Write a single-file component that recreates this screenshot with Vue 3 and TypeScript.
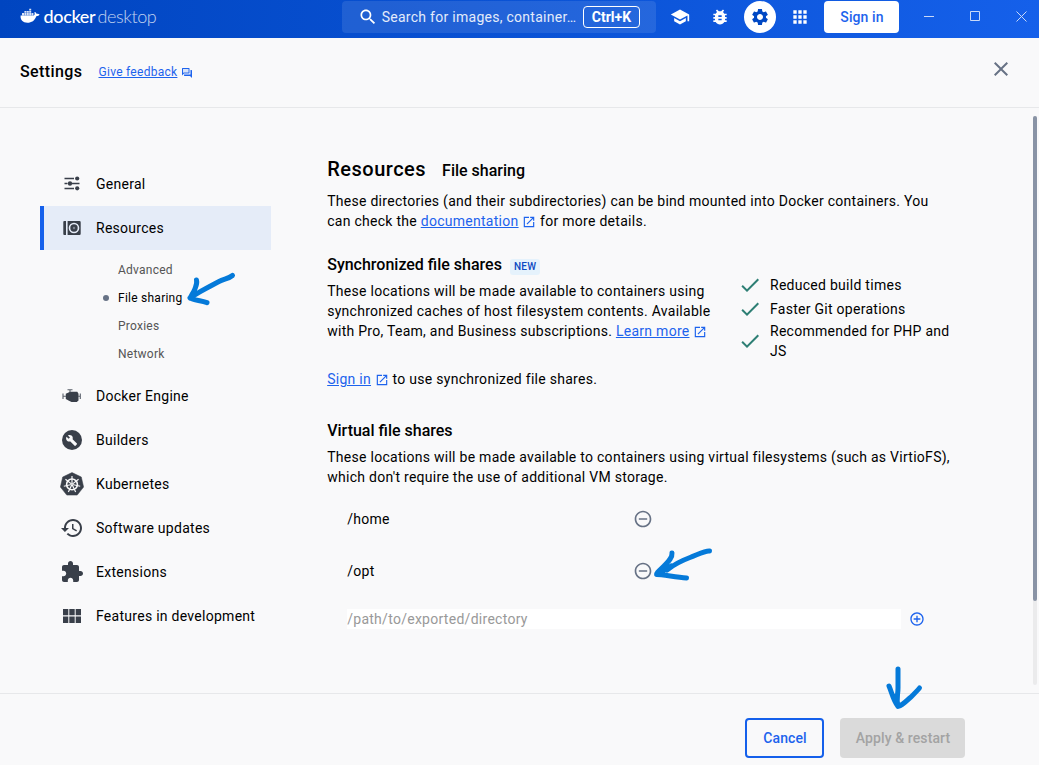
<script setup lang="ts">
import { ref } from 'vue'

interface NavItem {
  id: string
  label: string
  children?: string[]
}

const nav: NavItem[] = [
  { id: 'general', label: 'General' },
  { id: 'resources', label: 'Resources', children: ['Advanced', 'File sharing', 'Proxies', 'Network'] },
  { id: 'engine', label: 'Docker Engine' },
  { id: 'builders', label: 'Builders' },
  { id: 'kubernetes', label: 'Kubernetes' },
  { id: 'updates', label: 'Software updates' },
  { id: 'extensions', label: 'Extensions' },
  { id: 'features', label: 'Features in development' },
]

const active = ref('resources')
const activeChild = ref('File sharing')
const benefits = ['Reduced build times', 'Faster Git operations', 'Recommended for PHP and JS']
const shares = ref(['/home', '/opt'])
const newPath = ref('')
const spokes = [0, 51.43, 102.86, 154.29, 205.71, 257.14, 308.57]

const openIcon =
  'M19 19H5V5h7V3H3v18h18v-9h-2v7zM14 3v2h3.59l-9.83 9.83 1.41 1.41L19 6.41V10h2V3h-7z'
const closeIcon =
  'M19 6.41 17.59 5 12 10.59 6.41 5 5 6.41 10.59 12 5 17.59 6.41 19 12 13.41 17.59 19 19 17.59 13.41 12z'

function removeShare(path: string): void {
  shares.value = shares.value.filter((s) => s !== path)
}
</script>

<template>
  <div class="window">
    <header class="titlebar">
      <div class="brand">
        <svg class="whale" viewBox="0 0 20 16">
          <path d="M0.6 7.600H13.800C14.700 7 15 5.800 14.300 4.600L15 3.900C16.100 4.500 16.600 5.300 16.600 6C17.700 5.700 18.800 5.900 19.600 6.500C18.900 7.800 17.900 8.200 16.300 8.200C14.800 12.600 11.700 14.700 7.400 14.700C2.800 14.700 .2 12.300 .6 7.600Z" />
          <path d="M2 5h2v2.600H2zM4.400 5h2v2.600h-2zM6.800 5h2v2.600h-2zM9.200 5h2v2.600h-2zM11.600 5h1.800v2.600h-1.800zM4.400 3h2v1.700h-2zM6.800 3h2v1.700h-2zM9.200 3h2v1.700h-2zM9.200 .8h2v1.800h-2z" opacity=".85" />
        </svg>
        <span class="word docker">docker</span>
        <span class="word desktop">desktop</span>
      </div>
      <div class="search">
        <svg class="i20" viewBox="0 0 24 24"><path d="M15.5 14h-.79l-.28-.27C15.41 12.59 16 11.11 16 9.5 16 5.91 13.09 3 9.5 3S3 5.91 3 9.5 5.91 16 9.5 16c1.61 0 3.09-.59 4.23-1.57l.27.28v.79l5 4.99L20.49 19l-4.99-5zm-6 0C7.01 14 5 11.99 5 9.5S7.01 5 9.5 5 14 7.01 14 9.5 11.99 14 9.5 14z" /></svg>
        <span class="search-text">Search for images, container…</span>
        <kbd>Ctrl+K</kbd>
      </div>
      <div class="tools">
        <span class="tool"><svg class="i20" viewBox="0 0 24 24"><path d="M5 13.18v4L12 21l7-3.82v-4L12 17l-7-3.82zM12 3 1 9l11 6 9-4.91V17h2V9L12 3z" /></svg></span>
        <span class="tool"><svg class="i20" viewBox="0 0 24 24"><path d="M20 8h-2.81c-.45-.78-1.07-1.45-1.82-1.96L17 4.41 15.59 3l-2.17 2.17C12.96 5.06 12.49 5 12 5s-.96.06-1.41.17L8.41 3 7 4.41l1.62 1.63C7.88 6.55 7.26 7.22 6.81 8H4v2h2.09c-.05.33-.09.66-.09 1v1H4v2h2v1c0 .34.04.67.09 1H4v2h2.81c1.04 1.79 2.97 3 5.19 3s4.15-1.21 5.19-3H20v-2h-2.09c.05-.33.09-.66.09-1v-1h2v-2h-2v-1c0-.34-.04-.67-.09-1H20V8zm-6 8h-4v-2h4v2zm0-4h-4v-2h4v2z" /></svg></span>
        <span class="tool on"><svg class="i20" viewBox="0 0 24 24"><path d="M19.14 12.94c.04-.3.06-.61.06-.94 0-.32-.02-.64-.07-.94l2.03-1.58c.18-.14.23-.41.12-.61l-1.92-3.32c-.12-.22-.37-.29-.59-.22l-2.39.96c-.5-.38-1.03-.7-1.62-.94l-.36-2.54c-.04-.24-.24-.41-.48-.41h-3.84c-.24 0-.43.17-.47.41l-.36 2.54c-.59.24-1.13.57-1.62.94l-2.39-.96c-.22-.08-.47 0-.59.22L2.74 8.87c-.12.21-.08.47.12.61l2.03 1.58c-.05.3-.09.63-.09.94s.02.64.07.94l-2.03 1.58c-.18.14-.23.41-.12.61l1.92 3.32c.12.22.37.29.59.22l2.39-.96c.5.38 1.03.7 1.62.94l.36 2.54c.05.24.24.41.48.41h3.84c.24 0 .44-.17.47-.41l.36-2.54c.59-.24 1.13-.56 1.62-.94l2.39.96c.22.08.47 0 .59-.22l1.92-3.32c.12-.22.07-.47-.12-.61l-2.01-1.58zM12 15.6c-1.98 0-3.6-1.62-3.6-3.6s1.62-3.6 3.6-3.6 3.6 1.62 3.6 3.6-1.62 3.6-3.6 3.6z" /></svg></span>
        <span class="tool"><svg class="i20" viewBox="0 0 24 24"><path d="M4 8h4V4H4v4zm6 12h4v-4h-4v4zm-6 0h4v-4H4v4zm0-6h4v-4H4v4zm6 0h4v-4h-4v4zm6-10v4h4V4h-4zm-6 4h4V4h-4v4zm6 6h4v-4h-4v4zm0 6h4v-4h-4v4z" /></svg></span>
      </div>
      <button class="signin">Sign in</button>
      <svg class="winctl" viewBox="0 0 104 12">
        <path d="M0 6.500H10M46.500 1.500h9v9h-9zM92.500 1.500l10 10M102.500 1.500l-10 10" />
      </svg>
    </header>

    <div class="subheader">
      <h1>Settings</h1>
      <a class="feedback">Give feedback</a>
      <svg class="fb-icon" viewBox="0 0 24 24"><path d="M15 4v7H5.170L4 12.170V4h11m1-2H3c-.55 0-1 .45-1 1v14l4-4h10c.55 0 1-.45 1-1V3c0-.55-.45-1-1-1zm5 4h-2v9H6v2c0 .55.45 1 1 1h11l4 4V7c0-.55-.45-1-1-1z" /><path d="M4 4h11v7H4z" opacity=".15" /></svg>
      <svg class="close" viewBox="0 0 24 24"><path :d="closeIcon" /></svg>
    </div>

    <div class="body">
      <nav class="sidebar">
        <template v-for="item in nav" :key="item.id">
          <div class="nav-item" :class="{ active: item.id === active }" @click="active = item.id">
            <span class="nav-icon">
              <svg v-if="item.id === 'general'" viewBox="0 0 24 24">
                <path d="M4.500 6.500H14M4.500 11.500H7.500M12 11.500h7.500M4.500 16.500H14" stroke="#393f49" stroke-width="1.500" fill="none" />
                <circle cx="17.200" cy="6.500" r="2.100" /><circle cx="10" cy="11.500" r="2.200" /><circle cx="17.200" cy="16.300" r="2.100" />
              </svg>
              <svg v-else-if="item.id === 'resources'" viewBox="0 0 24 24">
                <path d="M4.200 5h1.800v14H4.200a.9.9 0 0 1-.9-.9V5.900a.9.9 0 0 1 .9-.9zM7.600 5H19.500a1.200 1.200 0 0 1 1.200 1.200v11.600a1.200 1.200 0 0 1-1.200 1.200H7.600z" />
                <circle cx="14" cy="12" r="4.500" fill="none" stroke="#e6ecf8" stroke-width="1.600" />
                <circle cx="14" cy="12" r="1.200" fill="#7b828f" />
              </svg>
              <svg v-else-if="item.id === 'engine'" viewBox="0 0 24 24">
                <path d="M8 8.700 10 7.700h7.300l1.200 2V16.600l-1.700 1.400H11.500L8.500 16.400 5.800 15V9.800z" />
                <path d="M7.500 5.700h5M10 5.700v2.500M3 9.500v5.500M3 12.300h3M18 12.300h2.300M20.300 9.500v5.500" fill="none" stroke="#5a606a" stroke-width="1.100" />
              </svg>
              <svg v-else-if="item.id === 'builders'" viewBox="0 0 24 24">
                <circle cx="12" cy="12" r="10" />
                <path fill="#f9f9fa" d="M16.900 15.500 12.600 11.200c.4-1.100.15-2.450-.75-3.350-1.100-1.100-2.700-1.200-3.900-.45l2 2-1.350 1.350-2.050-2c-.75 1.200-.6 2.800.45 3.900.9.900 2.200 1.150 3.350.75l4.300 4.300c.25.25.6.25.85 0l1.400-1.400c.25-.2.25-.6 0-.8z" />
              </svg>
              <svg v-else-if="item.id === 'kubernetes'" viewBox="0 0 24 24">
                <path d="M12 .6 21.300 5 23.600 15 17.200 23.100H6.800L.4 15 2.700 5z" stroke="#393f49" stroke-width=".5" stroke-linejoin="round" />
                <g stroke="#f9f9fa" fill="none">
                  <circle cx="12" cy="12.400" r="5.400" stroke-width="1.600" />
                  <path v-for="a in spokes" :key="a" d="M12 12V4" stroke-width="1.200" :transform="`rotate(${a} 12 12.4)`" />
                </g>
              </svg>
              <svg v-else-if="item.id === 'updates'" viewBox="0 0 24 24">
                <path d="M13 3c-4.970 0-9 4.030-9 9H1l3.890 3.890.07.14L9 12H6c0-3.870 3.130-7 7-7s7 3.130 7 7-3.130 7-7 7c-1.930 0-3.680-.79-4.940-2.060l-1.420 1.420C8.270 19.990 10.510 21 13 21c4.970 0 9-4.030 9-9s-4.030-9-9-9zm-1 5v5l4.280 2.540.72-1.210-3.500-2.080V8H12z" />
              </svg>
              <svg v-else-if="item.id === 'extensions'" viewBox="0 0 24 24">
                <path d="M20.500 11H19V7c0-1.100-.9-2-2-2h-4V3.500C13 2.120 11.880 1 10.500 1S8 2.120 8 3.500V5H4c-1.100 0-1.990.9-1.990 2v3.800H3.500c1.490 0 2.700 1.210 2.700 2.700s-1.210 2.700-2.700 2.700H2V20c0 1.100.9 2 2 2h3.800v-1.500c0-1.490 1.210-2.700 2.700-2.700 1.490 0 2.700 1.210 2.700 2.700V22H17c1.100 0 2-.9 2-2v-4h1.500c1.380 0 2.500-1.120 2.500-2.500S21.880 11 20.500 11z" />
              </svg>
              <svg v-else viewBox="0 0 24 24">
                <path d="M3 5h5.300v6.300H3zM9.300 5h5.400v6.300H9.300zM15.700 5H21v6.300h-5.300zM3 12.500h5.300V19H3zM9.300 12.500h5.400V19H9.300zM15.700 12.500H21V19h-5.300z" />
              </svg>
            </span>
            {{ item.label }}
          </div>
          <ul v-if="item.children" class="sub">
            <li v-for="c in item.children" :key="c" :class="{ current: c === activeChild }" @click="activeChild = c">{{ c }}</li>
          </ul>
        </template>
      </nav>

      <main class="content">
        <div class="title"><h2>Resources</h2><h3>File sharing</h3></div>
        <p class="intro">
          These directories (and their subdirectories) can be bind mounted into Docker containers. You can check the
          <a>documentation</a><svg class="ext" viewBox="0 0 24 24"><path :d="openIcon" /></svg> for more details.
        </p>

        <div class="sync-head"><h3>Synchronized file shares</h3><span class="badge">NEW</span></div>
        <div class="sync">
          <p>
            These locations will be made available to containers using synchronized caches of host filesystem contents.
            Available with Pro, Team, and Business subscriptions. <a>Learn more</a><svg class="ext" viewBox="0 0 24 24"><path :d="openIcon" /></svg>
          </p>
          <ul class="benefits">
            <li v-for="b in benefits" :key="b">
              <svg viewBox="0 0 24 24"><path d="M9 16.170 4.830 12l-1.420 1.410L9 19 21 7l-1.410-1.410z" /></svg>
              <span>{{ b }}</span>
            </li>
          </ul>
        </div>
        <p class="signin-line">
          <a>Sign in</a><svg class="ext" viewBox="0 0 24 24"><path :d="openIcon" /></svg> to use synchronized file shares.
        </p>

        <h3 class="virtual">Virtual file shares</h3>
        <p class="vdesc">
          These locations will be made available to containers using virtual filesystems (such as VirtioFS), which don't
          require the use of additional VM storage.
        </p>
        <div class="shares">
          <div v-for="s in shares" :key="s" class="share">
            <span>{{ s }}</span>
            <svg viewBox="0 0 24 24" @click="removeShare(s)">
              <path d="M12 2C6.480 2 2 6.480 2 12s4.480 10 10 10 10-4.480 10-10S17.520 2 12 2zm0 18c-4.410 0-8-3.590-8-8s3.590-8 8-8 8 3.590 8 8-3.590 8-8 8zM7 11v2h10v-2H7z" />
            </svg>
          </div>
          <div class="add">
            <input v-model="newPath" placeholder="/path/to/exported/directory" />
            <svg viewBox="0 0 24 24"><path d="M13 7h-2v4H7v2h4v4h2v-4h4v-2h-4V7zm-1-5C6.490 2 2 6.490 2 12s4.490 10 10 10 10-4.490 10-10S17.510 2 12 2zm0 18c-4.410 0-8-3.590-8-8s3.590-8 8-8 8 3.590 8 8-3.590 8-8 8z" /></svg>
          </div>
        </div>
      </main>
      <div class="scrollbar"><div class="thumb"></div></div>
    </div>

    <footer class="footer">
      <button class="cancel">Cancel</button>
      <button class="apply" disabled>Apply &amp; restart</button>
    </footer>

    <svg class="marks" viewBox="0 0 1039 765">
      <path d="M232.500 275.500C229 278.500 224 279 219 281.500C213 284.500 209 287 205 289C199 292 195 295 190 298M196.500 280C197.500 284 195.500 287 194.500 290C193 294 190 296 190.500 298C193 300 201 300.500 207 302.700" />
      <path d="M709.500 551C705 550.500 697 555 690 557.500C682 560.500 672 566 667 570M672 553C672.500 558 668 562 664 566C660 570 656 573 656.500 574.500C662 574.500 675 577 686.500 578M671 566L660 573" />
      <path d="M898 669V688C898 695 896 699 898 706M889 686C892 693 893 700 898 706.500C904 704.500 907 700 911 697C914 694 917 691 919.500 688M895 696L898 705" />
    </svg>
  </div>
</template>

<style>
body {
  margin: 0;
  background: #f9f9fa;
}
</style>

<style scoped>
* {
  box-sizing: border-box;
}
.window {
  position: relative;
  width: 1039px;
  height: 765px;
  display: flex;
  flex-direction: column;
  overflow: hidden;
  background: #f9f9fa;
  color: #000;
  font: 400 14px/20px Roboto, sans-serif;
  letter-spacing: 0.275px;
}
svg {
  fill: currentColor;
  flex: none;
}
h1, h2, h3, p, ul {
  margin: 0;
  padding: 0;
  font-weight: 500;
}
p, ul {
  font-weight: 400;
}
ul {
  list-style: none;
}
button {
  font: 500 14px/20px Roboto, sans-serif;
  letter-spacing: 0.1px;
  padding: 0 0 0 1px;
  border: 0;
  border-radius: 4px;
}
.titlebar {
  height: 38px;
  flex: none;
  display: flex;
  align-items: flex-start;
  color: #fff;
  background: linear-gradient(90deg, #0045c0 0%, #0c55d9 60%, #1560ea 100%);
}
.brand {
  width: 322px;
  margin-left: 20px;
  height: 32px;
  display: flex;
  align-items: center;
}
.whale {
  width: 20px;
  height: 16px;
}
.word {
  font: 500 18px/20px Lato, sans-serif;
  letter-spacing: -0.35px;
  margin-left: 3.500px;
}
.docker {
  width: 50.500px;
}
.desktop {
  font-weight: 300;
  letter-spacing: -0.4px;
  opacity: 0.75;
}
.search {
  width: 314px;
  height: 32px;
  margin-top: 1px;
  padding: 0 16px;
  display: flex;
  align-items: center;
  border-radius: 4px;
  background: rgba(255, 255, 255, 0.1);
}
.i20 {
  width: 20px;
  height: 20px;
  display: block;
}
.search-text {
  width: 196px;
  margin-left: 3.700px;
  margin-right: 5.300px;
  white-space: nowrap;
  color: #e3ebfa;
}
kbd {
  width: 57px;
  height: 22px;
  border: 1px solid #fff;
  border-radius: 4px;
  font: 700 14px/20px Roboto, sans-serif;
  letter-spacing: 0;
  text-align: center;
}
.tools {
  display: flex;
  gap: 8px;
  margin: 1px 8px 0;
}
.tool {
  width: 32px;
  height: 32px;
  border-radius: 50%;
  display: flex;
  align-items: center;
  justify-content: center;
}
.tool.on {
  background: #fff;
  color: #0048c4;
}
.signin {
  width: 75px;
  height: 32px;
  margin-top: 1px;
  background: #fff;
  color: #1d63ed;
}
.winctl {
  width: 104px;
  height: 12px;
  margin: 10px 0 0 25px;
  fill: none;
  stroke: #c9d9f8;
}
.subheader {
  height: 70px;
  flex: none;
  padding: 0 26px 1px 20px;
  display: flex;
  align-items: center;
  border-bottom: 1px solid #e7e8ea;
}
h1 {
  font-size: 16px;
  line-height: 24px;
  letter-spacing: 0.38px;
  width: 78.500px;
}
.feedback {
  font-size: 12px;
  line-height: 20px;
}
a {
  color: #1d63ed;
  text-decoration: underline;
}
.fb-icon {
  width: 12px;
  height: 12px;
  margin: 2px 0 0 4px;
  color: #1d63ed;
}
.close {
  width: 24px;
  height: 24px;
  margin: -6px 0 0 auto;
  color: #677285;
}
.body {
  height: 585px;
  flex: none;
  display: flex;
}
.sidebar {
  width: 231px;
  margin: 54px 56.200px 0 40px;
}
.nav-item {
  height: 44px;
  padding-left: 20px;
  display: flex;
  align-items: center;
}
.nav-item.active {
  background: #e5ecf8;
  border-left: 4px solid #1560eb;
  padding-left: 16px;
}
.nav-icon {
  width: 24px;
  height: 24px;
  margin-right: 12px;
  color: #393f49;
}
.nav-icon svg {
  width: 24px;
  height: 24px;
}
.sub {
  padding: 6px 0;
  font-size: 12px;
  letter-spacing: 0.25px;
  color: #555;
}
.sub li {
  height: 28px;
  line-height: 28px;
  padding-left: 63px;
  display: flex;
  align-items: center;
}
.sub li::before {
  content: '';
  width: 6px;
  height: 6px;
  border-radius: 50%;
  margin-right: 9px;
}
.sub li.current {
  color: #000;
}
.sub li.current::before {
  background: #677285;
}
.content {
  width: 637.800px;
  padding-top: 49px;
}
.title {
  height: 24px;
  display: flex;
  align-items: baseline;
  gap: 16px;
}
h2 {
  font-size: 20px;
  line-height: 24px;
  letter-spacing: 0.5px;
}
h3 {
  font-size: 16px;
  line-height: 24px;
  letter-spacing: 0;
}
.intro {
  width: 620px;
  margin-top: 10px;
}
.ext {
  width: 14px;
  height: 14px;
  margin: 0 0.300px 0 3.500px;
  vertical-align: -3px;
  color: #1d63ed;
}
.sync-head {
  display: flex;
  align-items: center;
  gap: 8px;
  margin-top: 22px;
}
.badge {
  height: 16px;
  margin-top: 3px;
  padding: 0 4px;
  border-radius: 3px;
  background: #e5f2fc;
  color: #0c49c2;
  font-size: 10px;
  line-height: 16px;
  font-weight: 500;
}
.sync {
  height: 92px;
  margin-top: -4px;
  display: flex;
}
.sync p {
  width: 394.800px;
  margin: 8px 16px 0 0;
}
.benefits {
  width: 216px;
}
.benefits li {
  display: flex;
  align-items: center;
  min-height: 24px;
}
.benefits svg {
  width: 24px;
  height: 24px;
  margin-right: 8px;
  color: #2e7f74;
  flex: none;
}
.signin-line {
  margin-top: 4px;
}
.virtual {
  margin-top: 30px;
}
.vdesc {
  margin-top: 4px;
}
.shares {
  padding: 6px 0 0 20px;
}
.share {
  height: 52px;
  display: flex;
  align-items: center;
}
.share span {
  width: 285.800px;
}
.share svg {
  width: 20px;
  height: 20px;
  color: #677285;
}
.add {
  display: flex;
  align-items: center;
  margin-top: 12px;
}
input {
  width: 553.800px;
  height: 20px;
  border: 0;
  padding: 0;
  background: #fff;
  font: inherit;
  letter-spacing: inherit;
}
input::placeholder {
  color: #999;
}
.add svg {
  width: 16px;
  height: 16px;
  margin-left: 8px;
  color: #1d63ed;
}
.scrollbar {
  width: 4px;
  height: 569px;
  margin: 8px 2px 0 auto;
  background: #ebebec;
  border-radius: 2px;
}
.thumb {
  height: 485px;
  background: #8993a5;
  border-radius: 2px;
}
.footer {
  flex: 1;
  border-top: 1px solid #e7e8ea;
  padding: 24px 74px 0 0;
  display: flex;
  justify-content: flex-end;
  gap: 16px;
}
.footer button {
  height: 40px;
}
.cancel {
  width: 79px;
  border: 2px solid #1560eb;
  background: #f9f9fa;
  color: #1d63ed;
}
.apply {
  width: 125px;
  background: #dadada;
  color: #a3a3a3;
}
.marks {
  position: absolute;
  inset: 0;
  width: 1039px;
  height: 765px;
  fill: none;
  stroke: #057ad9;
  stroke-width: 5;
  stroke-linecap: round;
  stroke-linejoin: round;
  pointer-events: none;
}
</style>
